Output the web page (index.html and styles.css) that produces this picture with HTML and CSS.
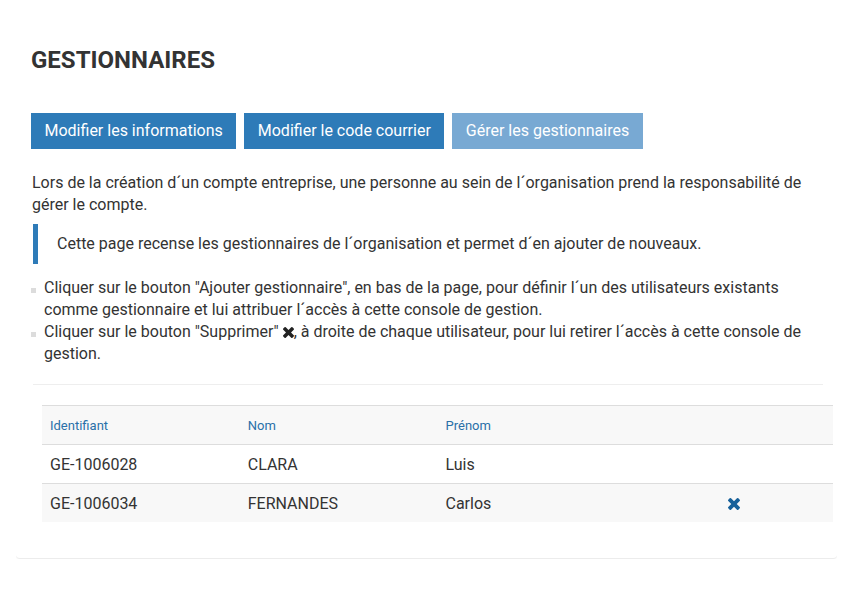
FILE: index.html
```html
<!DOCTYPE html>
<html lang="fr">
<head>
<meta charset="utf-8">
<title>Gestionnaires</title>
<link rel="stylesheet" href="styles.css">
</head>
<body>
<div class="card">
  <h1 class="title">GESTIONNAIRES</h1>
  <div class="btns">
    <a class="btn">Modifier les informations</a>
    <a class="btn">Modifier le code courrier</a>
    <a class="btn btn-disabled">Gérer les gestionnaires</a>
  </div>
  <p class="intro">Lors de la création d´un compte entreprise, une personne au sein de l´organisation prend la responsabilité de gérer le compte.</p>
  <blockquote class="quote">Cette page recense les gestionnaires de l´organisation et permet d´en ajouter de nouveaux.</blockquote>
  <ul class="list">
    <li>Cliquer sur le bouton "Ajouter gestionnaire", en bas de la page, pour définir l´un des utilisateurs existants comme gestionnaire et lui attribuer l´accès à cette console de gestion.</li>
    <li>Cliquer sur le bouton "Supprimer" <svg class="x" viewBox="110 366 1188 1188" aria-hidden="true"><path d="M1298 1322q0 40-28 68l-136 136q-28 28-68 28t-68-28l-294-294-294 294q-28 28-68 28t-68-28l-136-136q-28-28-28-68t28-68l294-294-294-294q-28-28-28-68t28-68l136-136q28-28 68-28t68 28l294 294 294-294q28-28 68-28t68 28l136 136q28 28 28 68t-28 68l-294 294 294 294q28 28 28 68z"/></svg>, à droite de chaque utilisateur, pour lui retirer l´accès à cette console de gestion.</li>
  </ul>
  <hr class="sep">
  <table class="grid">
    <thead>
      <tr><th>Identifiant</th><th>Nom</th><th>Prénom</th><th></th></tr>
    </thead>
    <tbody>
      <tr><td>GE-1006028</td><td>CLARA</td><td>Luis</td><td></td></tr>
      <tr class="alt"><td>GE-1006034</td><td>FERNANDES</td><td>Carlos</td><td class="act"><svg class="del" viewBox="110 366 1188 1188" aria-hidden="true"><path d="M1298 1322q0 40-28 68l-136 136q-28 28-68 28t-68-28l-294-294-294 294q-28 28-68 28t-68-28l-136-136q-28-28-28-68t28-68l294-294-294-294q-28-28-28-68t28-68l136-136q28-28 68-28t68 28l294 294 294-294q28-28 68-28t68 28l136 136q28 28 28 68t-28 68l-294 294 294 294q28 28 28 68z"/></svg></td></tr>
    </tbody>
  </table>
</div>
</body>
</html>
```
FILE: styles.css
```css
html, body {
  margin: 0;
  padding: 0;
  background: #fff;
}
body {
  font-family: Roboto, "Liberation Sans", sans-serif;
  color: #333;
}
.card {
  margin: 0 18px 0 16px;
  padding: 44px 14px 36px 16px;
  border-bottom: 1px solid #ececec;
  border-radius: 0 0 4px 4px;
  box-shadow: 0 1px 1px rgba(0,0,0,0.03);
}
.title {
  margin: 0 0 37px -1px;
  font-size: 24px;
  line-height: 32px;
  font-weight: 700;
  color: #333;
}
.btns {
  display: flex;
  gap: 8px;
  margin-left: -1px;
}
.btn {
  display: inline-block;
  background: #2e7bb8;
  color: #fff;
  font-size: 16px;
  line-height: 20px;
  padding: 8px 13.5px;
}
.btn-disabled {
  background: #78a9d3;
}
.intro {
  margin: 23px 0 0 0;
  font-size: 16px;
  line-height: 22px;
}
.quote {
  margin: 8px 0 0 1px;
  border-left: 5px solid #2e7bb8;
  padding: 9px 19px;
  font-size: 16px;
  line-height: 22px;
}
.list {
  margin: 13px 0 0 0;
  padding: 0 0 0 12px;
  list-style: none;
  font-size: 16px;
  line-height: 22px;
}
.list li::before {
  content: "";
  display: inline-block;
  width: 5px;
  height: 5px;
  background: #dcdcdc;
  margin-left: -13px;
  margin-right: 8px;
}
.x {
  width: 11px;
  height: 11px;
  fill: #222;
  vertical-align: -1px;
}
.sep {
  margin: 19px 0 20px 1px;
  border: 0;
  border-top: 1px solid #eee;
  height: 0;
}
.grid {
  margin-left: 10px;
  width: 100%;
  border-collapse: collapse;
  table-layout: fixed;
}
.grid th {
  text-align: left;
  font-weight: 400;
  font-size: 13px;
  color: #2a70a8;
  background: #f8f8f8;
  padding: 0 8px;
  height: 38px;
  border-top: 1px solid #ddd;
  border-bottom: 1px solid #ddd;
}
.grid td {
  font-size: 16px;
  padding: 0 8px;
  height: 38px;
  border-bottom: 1px solid #ddd;
}
.grid tr.alt td {
  background: #f8f8f8;
  border-bottom: 0;
}
.grid td.act {
  text-align: center;
}
.del {
  width: 12px;
  height: 12px;
  fill: #16609a;
  vertical-align: -1px;
}
```
